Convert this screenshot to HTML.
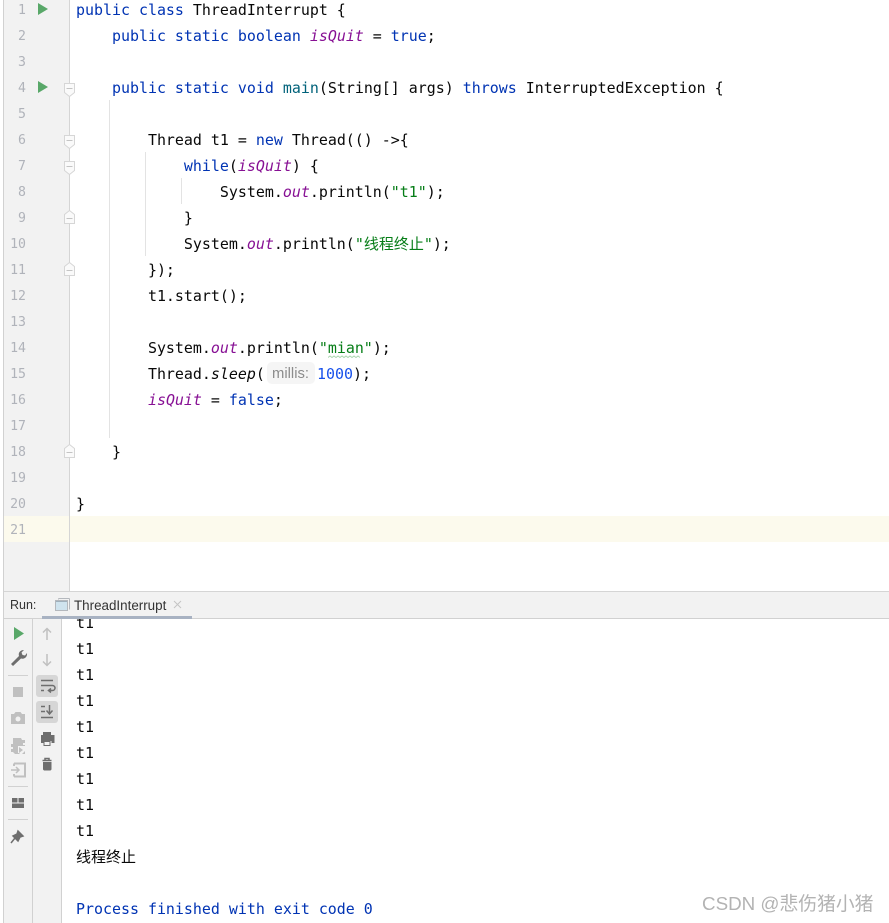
<!DOCTYPE html>
<html><head><meta charset="utf-8"><style>
html,body{margin:0;padding:0;background:#fff}
#r{position:relative;width:889px;height:923px;overflow:hidden;background:#fff;font-family:"DejaVu Sans Mono","Noto Sans CJK SC",monospace;font-size:14.95px;color:#080808}
.a{position:absolute}
.l{position:absolute;left:76px;height:26px;line-height:26px;white-space:pre;width:800px}
.n{position:absolute;left:4px;width:22px;text-align:right;height:26px;line-height:26px;color:#b0b3ba;font-size:13.200px;font-family:"DejaVu Sans Mono",monospace;margin-top:2px}
b{font-weight:normal;color:#0033b3}
i{color:#871094}
em{font-style:italic}
.s{color:#067d17}
.c{color:#1750eb}
.cn{font-family:"WenQuanYi Zen Hei","Noto Sans CJK SC",sans-serif;font-size:15px}
.g{position:absolute;width:1px;background:#e3e3e3}
</style></head><body><div id="r">
<div class="a" style="left:0;top:0;width:3px;height:923px;background:#fff"></div>
<div class="a" style="left:3px;top:0;width:1px;height:923px;background:#d1d1d1"></div>
<div class="a" style="left:4px;top:0;width:65px;height:591px;background:#f2f2f2"></div>
<div class="a" style="left:69px;top:0;width:1px;height:591px;background:#d5d5d5"></div>
<div class="a" style="left:70px;top:516px;width:819px;height:26px;background:#fcfaed"></div>
<div class="a" style="left:4px;top:516px;width:65px;height:26px;background:#fcfaed"></div>
<div class="g" style="left:109px;top:100px;height:338px"></div>
<div class="g" style="left:145px;top:152px;height:104px"></div>
<div class="g" style="left:181px;top:178px;height:26px"></div>

<div class="n" style="top:-4px">1</div><div class="n" style="top:22px">2</div><div class="n" style="top:48px">3</div><div class="n" style="top:74px">4</div><div class="n" style="top:100px">5</div><div class="n" style="top:126px">6</div><div class="n" style="top:152px">7</div><div class="n" style="top:178px">8</div><div class="n" style="top:204px">9</div><div class="n" style="top:230px">10</div><div class="n" style="top:256px">11</div><div class="n" style="top:282px">12</div><div class="n" style="top:308px">13</div><div class="n" style="top:334px">14</div><div class="n" style="top:360px">15</div><div class="n" style="top:386px">16</div><div class="n" style="top:412px">17</div><div class="n" style="top:438px">18</div><div class="n" style="top:464px">19</div><div class="n" style="top:490px">20</div><div class="n" style="top:516px">21</div>

<svg class="a" style="left:0;top:0" width="80" height="470" fill="none">
<path d="M38 3v12l10-6z M38 81v12l10-6z" fill="#59a869"/>
<g stroke="#d6d6d6" fill="#fafafa">
<path d="M64.500 83.500h10v9l-5 4-5-4z"/>
<path d="M64.500 135.500h10v9l-5 4-5-4z"/>
<path d="M64.500 161.500h10v9l-5 4-5-4z"/>
<path d="M64.500 214.500l5-4 5 4v9h-10z"/>
<path d="M64.500 266.500l5-4 5 4v9h-10z"/>
<path d="M64.500 448.500l5-4 5 4v9h-10z"/>
</g>
<path d="M66.500 88.500h6M66.500 140.500h6M66.500 166.500h6M66.500 218.500h6M66.500 270.500h6M66.500 452.500h6" stroke="#c4c4c4"/>
</svg>

<div class="l" style="top:-3px"><b>public class</b> ThreadInterrupt {</div>
<div class="l" style="top:23px">    <b>public static boolean</b> <i><em>isQuit</em></i> = <b>true</b>;</div>
<div class="l" style="top:75px">    <b>public static void</b> <span style="color:#00627a">main</span>(String[] args) <b>throws</b> InterruptedException {</div>
<div class="l" style="top:127px">        Thread t1 = <b>new</b> Thread(() -&gt;{</div>
<div class="l" style="top:153px">            <b>while</b>(<i><em>isQuit</em></i>) {</div>
<div class="l" style="top:179px">                System.<i><em>out</em></i>.println(<span class="s">"t1"</span>);</div>
<div class="l" style="top:205px">            }</div>
<div class="l" style="top:231px">            System.<i><em>out</em></i>.println(<span class="s">"<span class="cn" style="display:inline-block;width:60px;line-height:20px">线程终止</span>"</span>);</div>
<div class="l" style="top:257px">        });</div>
<div class="l" style="top:283px">        t1.start();</div>
<div class="l" style="top:335px">        System.<i><em>out</em></i>.println(<span class="s">"mian"</span>);</div>
<svg class="a" style="left:328px;top:355px" width="36" height="4" fill="none"><path d="M0 2.500l2-1.500 2 1.500 2-1.500 2 1.500 2-1.500 2 1.500 2-1.500 2 1.500 2-1.500 2 1.500 2-1.500 2 1.500 2-1.500 2 1.500 2-1.500 2 1.500" stroke="#a9d5ae"/></svg>
<div class="a" style="left:267px;top:362px;width:48px;height:22px;background:#f5f5f5;border-radius:5px"></div>
<div class="a" style="left:272px;top:361px;font:14.800px/26px 'Liberation Sans',sans-serif;color:#8c8c8c">millis:</div>
<div class="l" style="top:361px">        Thread.<em>sleep</em>(</div>
<div class="l" style="top:361px;left:317px"><span class="c">1000</span>);</div>
<div class="l" style="top:387px">        <i><em>isQuit</em></i> = <b>false</b>;</div>
<div class="l" style="top:439px">    }</div>
<div class="l" style="top:491px">}</div>

<!-- Run panel -->
<div class="a" style="left:4px;top:591px;width:885px;height:1px;background:#d5d5d5"></div>
<div class="a" style="left:4px;top:592px;width:885px;height:26px;background:#f2f2f2"></div>
<div class="a" style="left:4px;top:618px;width:885px;height:1px;background:#d1d1d1"></div>
<div class="a" style="left:42px;top:616px;width:150px;height:3px;background:#a8b2c2"></div>
<div class="a" style="left:10px;top:596px;font:12.500px/19px 'Liberation Sans',sans-serif;color:#333">Run:</div>
<div class="a" style="left:74px;top:596px;font:13.400px/19px 'Liberation Sans',sans-serif;color:#333">ThreadInterrupt</div>
<svg class="a" style="left:50px;top:595px" width="135" height="20" fill="none">
<path d="M8.500 3.500h11M8.500 3.500v1M19.500 3.500v11" stroke="#b4b8bd"/>
<rect x="5.500" y="5.500" width="12" height="10" fill="#cfe3ee" stroke="#b4b8bd"/>
<path d="M6 6.500h11" stroke="#9fb0bc"/>
<path d="M124 6l7 7M131 6l-7 7" stroke="#c4c4c4"/>
</svg>

<div class="a" style="left:4px;top:619px;width:28px;height:304px;background:#f2f2f2"></div>
<div class="a" style="left:32px;top:619px;width:1px;height:304px;background:#d1d1d1"></div>
<div class="a" style="left:33px;top:619px;width:28px;height:304px;background:#f2f2f2"></div>
<div class="a" style="left:61px;top:619px;width:1px;height:304px;background:#d1d1d1"></div>

<svg class="a" style="left:0;top:619px" width="62" height="304" fill="none">
<!-- left toolbar -->
<path d="M14 8v13l10-6.500z" fill="#59a869"/>
<path d="M12 47l8-8c-1-3 1-6 5-6l-2.500 2.500 1 2.500 2.500 .5 2-2.500c.5 4-2.500 6.500-6 5.500l-8 7.500z" fill="#6e6e6e" transform="translate(-1 -2)"/>
<path d="M8 56.500h20M8 167.500h20M8 200.500h20" stroke="#d1d1d1"/>
<rect x="13" y="68" width="10" height="10" fill="#c0c0c0"/>
<path d="M11 95h3l1.500-2h5l1.500 2h3v10h-14z" fill="#c0c0c0"/><circle cx="18" cy="100" r="2.500" fill="#f2f2f2"/>
<path d="M13 119h8l1 2 3 0v3h-2v2h2v3l-3 0v2h2v2h-3l-2 2h-4l-2-2h-2v-3h2v-2h-2v-3h2z" fill="#c0c0c0"/><path d="M18 127h7v7h-7z" fill="#f2f2f2"/><path d="M19 128l4 3-4 3zM25 132l-3 3 3 0z" fill="#c0c0c0"/>
<path d="M14 144.500h11v13h-11M14 147v-2.500M14 155v2.500" stroke="#c0c0c0" stroke-width="2"/><path d="M11 151h8M16 148l3 3-3 3" stroke="#c0c0c0" stroke-width="1.500"/>
<path d="M12 179h5.500v4.500h-5.500zM18.500 179h5.500v4.500h-5.500zM12 184.500h12v4.500h-12z" fill="#6e6e6e"/>
<path d="M18 212l5 5-3 1-2 4-5-5 4-2zM15 219l-4 5" stroke="#6e6e6e" stroke-width="1.500" fill="#6e6e6e"/>
<!-- right toolbar -->
<path d="M47 21V10M43 13.500l4-4 4 4" stroke="#c0c0c0" stroke-width="1.500"/>
<path d="M47 35v11M43 42.500l4 4 4-4" stroke="#c0c0c0" stroke-width="1.500"/>
<rect x="36" y="56" width="22" height="22" rx="3" fill="#d6d6d6"/>
<rect x="36" y="82" width="22" height="22" rx="3" fill="#d6d6d6"/>
<path d="M41 61.500h12M41 66.500h11.500a2.500 2.500 0 0 1 0 5h-3.500M41 66.500h3M41 71.500h3M51 69.500l-2.500 2 2.500 2" stroke="#6e6e6e" stroke-width="1.500"/>
<path d="M41 87.500h4M41 92.500h4M41 98.500h12M49.500 86v9M46.500 91.500l3 3.500 3-3.500" stroke="#6e6e6e" stroke-width="1.500"/>
<path d="M43 113h8v3h3.500v8h-3v-2h-7v2h-3.500v-8h2z" fill="#6e6e6e"/><path d="M44 122.500h6v4h-6z" stroke="#6e6e6e" fill="#f2f2f2"/>
<path d="M42.500 141.500h9M45 141v-1.500h4v1.500" stroke="#6e6e6e" stroke-width="1.500"/><path d="M43 143h8.500v7.500l-1 1h-6.500l-1-1z" fill="#6e6e6e"/>
</svg>

<div class="a" style="left:62px;top:619px;width:827px;height:304px;overflow:hidden;background:#fff">
<div class="l" style="left:14px;top:-9px">t1</div><div class="l" style="left:14px;top:17px">t1</div><div class="l" style="left:14px;top:43px">t1</div><div class="l" style="left:14px;top:69px">t1</div><div class="l" style="left:14px;top:95px">t1</div><div class="l" style="left:14px;top:121px">t1</div><div class="l" style="left:14px;top:147px">t1</div><div class="l" style="left:14px;top:173px">t1</div><div class="l" style="left:14px;top:199px">t1</div>
<div class="l cn" style="left:14px;top:225px;line-height:26px">线程终止</div>
<div class="l" style="left:14px;top:277px;color:#0033b3">Process finished with exit code 0</div>
</div>
<div class="a" style="left:702px;top:892px;font:18.800px/24px 'Liberation Sans','Noto Sans CJK SC',sans-serif;color:#b3b3b3;white-space:pre">CSDN @悲伤猪小猪</div>
</div></body></html>
